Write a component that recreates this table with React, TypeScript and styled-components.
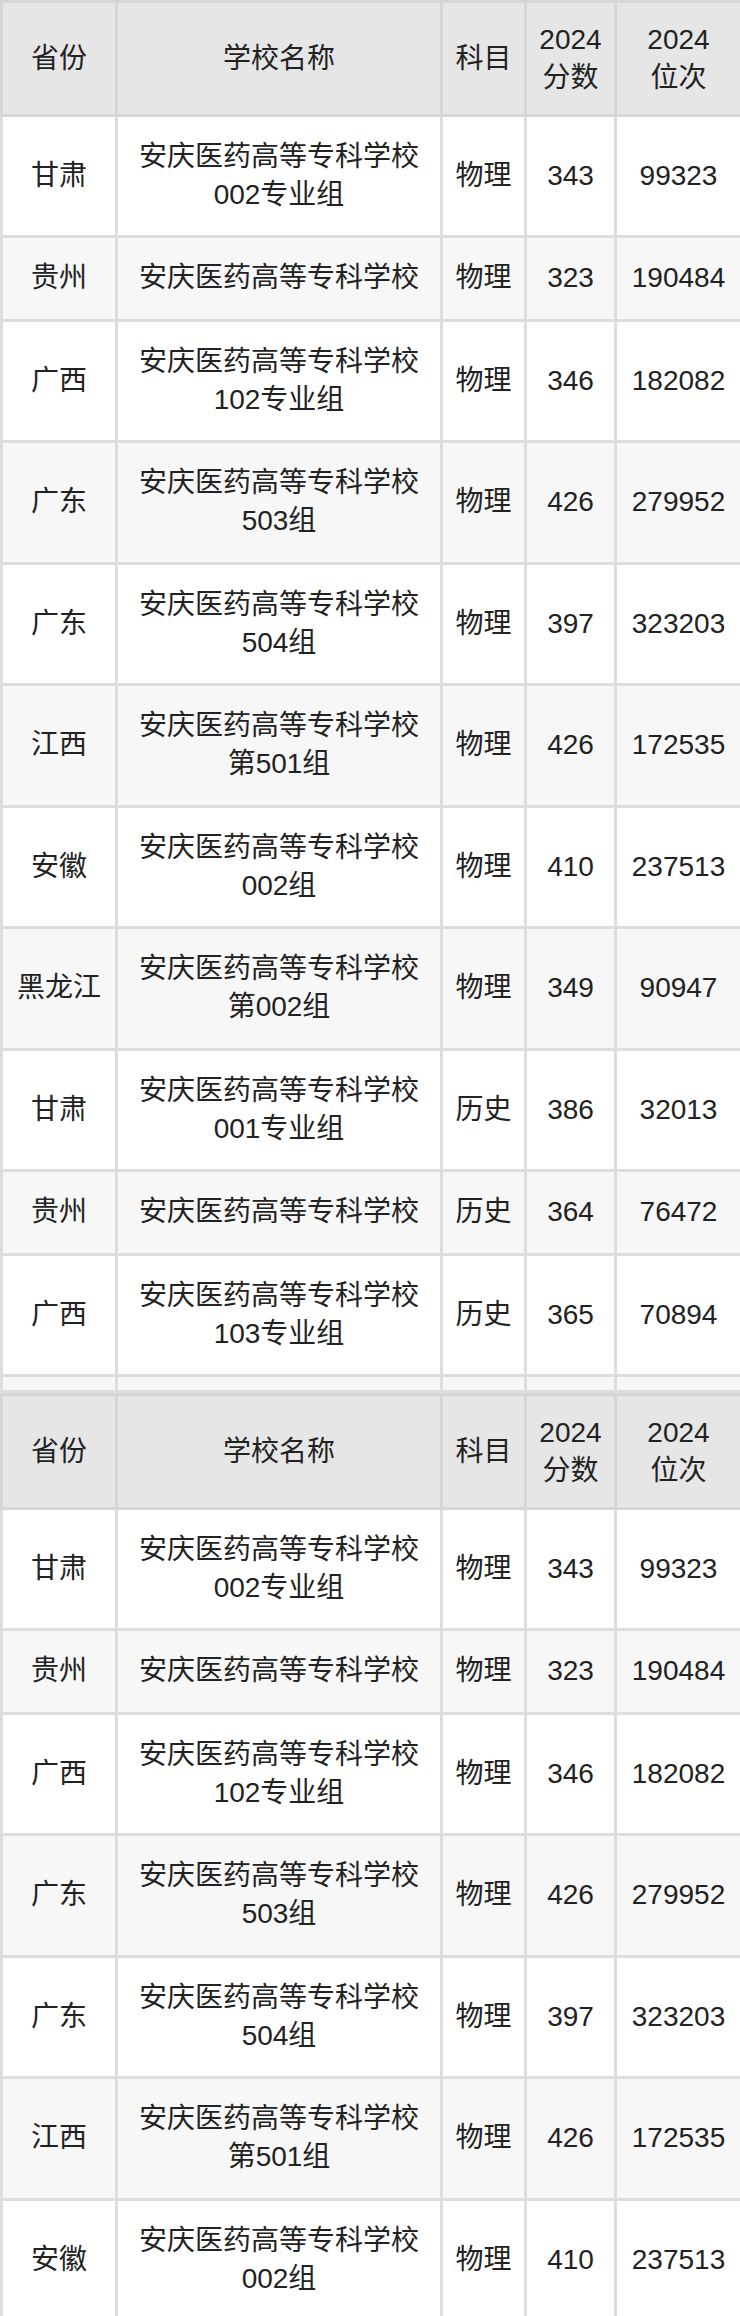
import React from 'react';
import styled, { createGlobalStyle } from 'styled-components';

const GlobalStyle = createGlobalStyle`
  html, body {
    margin: 0;
    padding: 0;
    background: #ffffff;
  }
  body {
    font-family: "Liberation Sans", "Noto Sans CJK SC", sans-serif;
    color: #222222;
  }
`;

const Table = styled.table`
  width: 740px;
  border-collapse: collapse;
  table-layout: fixed;
  font-size: 28px;
  line-height: 38px;
  color: #222222;
`;

const Col = styled.col<{ $w: number }>`
  width: ${(p) => p.$w}px;
`;

const HeadCell = styled.th`
  box-sizing: border-box;
  background: #e6e6e6;
  border: 3px solid #d6d6d6;
  padding: 17.5px 4px 17px;
  font-weight: 400;
  text-align: center;
  vertical-align: middle;
`;

const Row = styled.tr`
  background: #ffffff;
  &:nth-child(even) {
    background: #f7f7f7;
  }
`;

const Cell = styled.td`
  box-sizing: border-box;
  border: 3px solid #dddddd;
  padding: 21.25px 8px;
  text-align: center;
  vertical-align: middle;
`;

const EmptyCell = styled.td`
  border: 3px solid #dddddd;
  height: 13px;
  padding: 0;
`;

type Entry = [string, string, string, string, string];

const firstRows: Entry[] = [
  ['甘肃', '安庆医药高等专科学校002专业组', '物理', '343', '99323'],
  ['贵州', '安庆医药高等专科学校', '物理', '323', '190484'],
  ['广西', '安庆医药高等专科学校102专业组', '物理', '346', '182082'],
  ['广东', '安庆医药高等专科学校503组', '物理', '426', '279952'],
  ['广东', '安庆医药高等专科学校504组', '物理', '397', '323203'],
  ['江西', '安庆医药高等专科学校第501组', '物理', '426', '172535'],
  ['安徽', '安庆医药高等专科学校002组', '物理', '410', '237513'],
  ['黑龙江', '安庆医药高等专科学校第002组', '物理', '349', '90947'],
  ['甘肃', '安庆医药高等专科学校001专业组', '历史', '386', '32013'],
  ['贵州', '安庆医药高等专科学校', '历史', '364', '76472'],
  ['广西', '安庆医药高等专科学校103专业组', '历史', '365', '70894'],
];

const secondRows: Entry[] = firstRows.slice(0, 7);

const widths = [115, 325, 84, 90, 126];

const Header: React.FC = () => (
  <thead>
    <tr>
      <HeadCell>省份</HeadCell>
      <HeadCell>学校名称</HeadCell>
      <HeadCell>科目</HeadCell>
      <HeadCell>2024<br />分数</HeadCell>
      <HeadCell>2024<br />位次</HeadCell>
    </tr>
  </thead>
);

const ScoreTable: React.FC<{ rows: Entry[]; trailing?: boolean }> = ({ rows, trailing }) => (
  <Table>
    <colgroup>
      {widths.map((w, i) => (
        <Col key={i} $w={w} />
      ))}
    </colgroup>
    <Header />
    <tbody>
      {rows.map((r, i) => (
        <Row key={i}>
          {r.map((c, j) => (
            <Cell key={j}>{c}</Cell>
          ))}
        </Row>
      ))}
      {trailing && (
        <Row>
          {widths.map((_, j) => (
            <EmptyCell key={j} />
          ))}
        </Row>
      )}
    </tbody>
  </Table>
);

const App: React.FC = () => {
  return (
    <>
      <GlobalStyle />
      <ScoreTable rows={firstRows} trailing />
      <ScoreTable rows={secondRows} />
    </>
  );
};

export default App;
